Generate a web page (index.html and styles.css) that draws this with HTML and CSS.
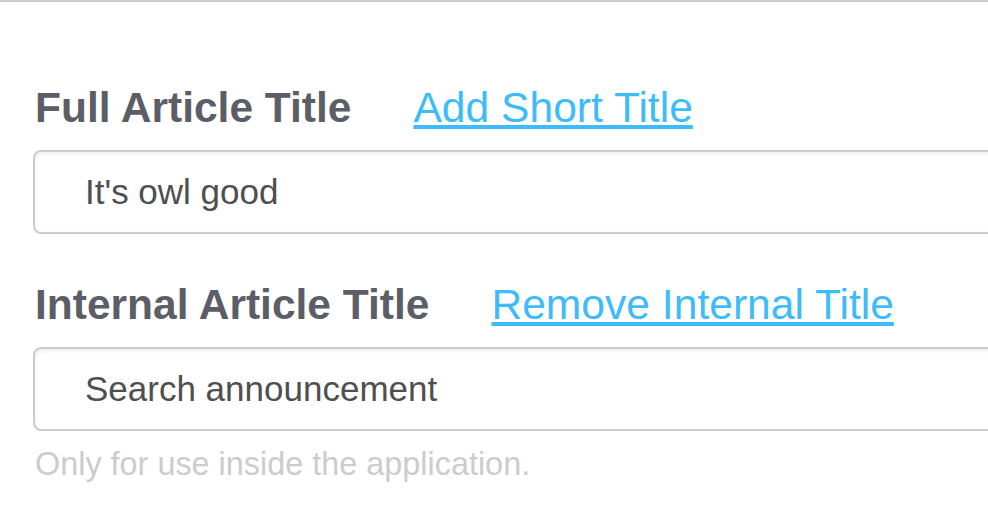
FILE: index.html
```html
<!DOCTYPE html>
<html lang="en">
<head>
<meta charset="utf-8">
<title>Article titles</title>
<link rel="stylesheet" href="styles.css">
</head>
<body>
<div class="page">
  <form class="form">
    <div class="field">
      <div class="label-row">
        <label class="label" for="full">Full Article Title</label>
        <a class="link" href="#">Add Short Title</a>
      </div>
      <input class="input" id="full" type="text" value="It's owl good">
    </div>
    <div class="field field-second">
      <div class="label-row">
        <label class="label" for="internal">Internal Article Title</label>
        <a class="link" href="#">Remove Internal Title</a>
      </div>
      <input class="input" id="internal" type="text" value="Search announcement">
      <p class="help">Only for use inside the application.</p>
    </div>
  </form>
</div>
</body>
</html>
```

FILE: styles.css
```css
html, body {
  margin: 0;
  padding: 0;
  background: #ffffff;
  overflow: hidden;
}

.page {
  border-top: 2px solid #cccccc;
  font-family: "Liberation Sans", Arial, sans-serif;
  width: 100%;
  overflow: hidden;
}

.form {
  padding: 81px 0 0 33px;
  margin: 0;
}

.field {
  display: flex;
  flex-direction: column;
}

.field-second {
  margin-top: 46px;
}

.label-row {
  display: flex;
  align-items: baseline;
  gap: 62px;
  height: 48px;
  line-height: 48px;
  margin-bottom: 19px;
  padding-left: 2px;
}

.label {
  font-size: 42.5px;
  font-weight: bold;
  color: #5c5e67;
}

.link {
  font-size: 42.6px;
  color: #3ebcfa;
  text-decoration: underline;
}

.input {
  box-sizing: border-box;
  width: 1020px;
  flex: none;
  height: 84px;
  border: 2px solid #cccccc;
  border-radius: 8px;
  box-shadow: inset 0 2px 4px rgba(0, 0, 0, 0.075);
  padding: 0 0 0 50px;
  margin: 0;
  font-family: "Liberation Sans", Arial, sans-serif;
  font-size: 35px;
  color: #4f4f4f;
  background: #ffffff;
  outline: none;
}

.help {
  margin: 15px 0 0 2px;
  font-size: 32.4px;
  line-height: 37px;
  color: #cccccc;
}
```
